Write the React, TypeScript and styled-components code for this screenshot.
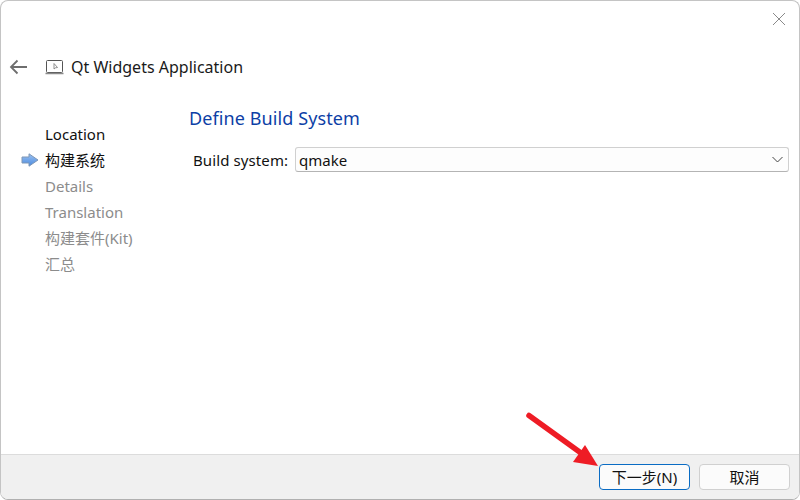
import React from "react";
import styled, { createGlobalStyle } from "styled-components";

const Global = createGlobalStyle`
  html, body { margin: 0; padding: 0; background: #fff; }
  #root { width: 800px; height: 500px; overflow: hidden; }
`;

const FONT = `"Noto Sans", "Noto Sans CJK SC", sans-serif`;

const Dialog = styled.div`
  position: relative;
  box-sizing: border-box;
  width: 800px;
  height: 500px;
  display: flex;
  flex-direction: column;
  border: 1px solid #c4c4c4;
  border-bottom-color: #b0b0b0;
  border-radius: 8px;
  overflow: hidden;
  background: #fff;
  font-family: ${FONT};
  font-size: 15px;
  color: #111;
`;

const CloseBar = styled.div`
  height: 48px;
  display: flex;
  justify-content: flex-end;
  align-items: flex-start;
  padding: 11px 13px 0 0;
  box-sizing: border-box;
`;

const TitleRow = styled.div`
  height: 36px;
  display: flex;
  align-items: center;
  padding-left: 7px;
`;

const BackIcon = styled.svg`
  width: 20px;
  height: 20px;
  margin-right: 17px;
`;

const AppIcon = styled.svg`
  width: 20px;
  height: 18px;
  margin-right: 6px;
`;

const Title = styled.div`
  font-size: 16px;
  line-height: 20px;
  color: #1a1a1a;
`;

const Body = styled.div`
  flex: 1;
  display: flex;
  min-height: 0;
`;

const Steps = styled.ul`
  list-style: none;
  margin: 0;
  padding: 36px 0 0;
  width: 188px;
  flex-shrink: 0;
`;

const Step = styled.li<{ $state: "done" | "active" | "todo" }>`
  height: 26px;
  line-height: 26px;
  padding-left: 44px;
  position: relative;
  white-space: nowrap;
  font-size: 15px;
  color: ${(p) => (p.$state === "todo" ? "#8c8c8c" : "#111")};
`;

const StepArrow = styled.svg`
  position: absolute;
  left: 20px;
  top: 6px;
  width: 18px;
  height: 14px;
`;

const Main = styled.div`
  flex: 1;
  padding: 21px 10px 0 0;
  min-width: 0;
`;

const Heading = styled.h1`
  margin: 0 0 17px;
  font-weight: 400;
  font-size: 18px;
  line-height: 24px;
  letter-spacing: 0.1px;
  color: #0d3fa6;
`;

const FieldRow = styled.div`
  display: flex;
  align-items: center;
  padding-left: 4px;
`;

const Label = styled.label`
  width: 102px;
  font-size: 15px;
  letter-spacing: 0.1px;
  color: #111;
  white-space: nowrap;
`;

const Select = styled.div`
  flex: 1;
  box-sizing: border-box;
  height: 25px;
  display: flex;
  align-items: center;
  justify-content: space-between;
  padding: 0 5px 0 3px;
  background: #fdfdfd;
  border: 1px solid #d0d0d0;
  border-bottom-color: #b4b4b4;
  border-radius: 3px;
  font-size: 15px;
  color: #111;
`;

const Footer = styled.div`
  box-sizing: border-box;
  height: 45px;
  display: flex;
  justify-content: flex-end;
  align-items: center;
  gap: 9px;
  padding: 0 9px 0 0;
  background: #f0f0f0;
  border-top: 1px solid #dcdcdc;
`;

const Button = styled.button<{ $primary?: boolean }>`
  box-sizing: border-box;
  width: 91px;
  height: 26px;
  padding: 0;
  background: #fbfbfb;
  border: 1px solid ${(p) => (p.$primary ? "#0a6cc4" : "#d0d0d0")};
  border-radius: 4px;
  font-family: ${FONT};
  font-size: 15px;
  line-height: 24px;
  color: #111;
`;

const PointerArrow = styled.svg`
  position: absolute;
  left: 520px;
  top: 408px;
  width: 90px;
  height: 70px;
`;

export default function App() {
  return (
    <>
      <Global />
      <Dialog>
        <CloseBar>
          <svg width="14" height="14" viewBox="0 0 14 14">
            <path d="M1 1 L13 13 M13 1 L1 13" stroke="#8a8a8a" strokeWidth="1" fill="none" />
          </svg>
        </CloseBar>
        <TitleRow>
          <BackIcon viewBox="0 0 20 20">
            <path d="M19 10 H3 M9.5 3.5 L3 10 L9.5 16.5" stroke="#6e6e6e" strokeWidth="1.8" fill="none" />
          </BackIcon>
          <AppIcon viewBox="0 0 20 18">
            <rect x="1.5" y="2.5" width="16" height="12" rx="1" fill="#fff" stroke="#555" strokeWidth="1" />
            <path d="M0.5 15.5 H18.5" stroke="#8a8a8a" strokeWidth="1.5" />
            <path d="M9 5.5 V11 L10.5 9.8 L12.5 9.5 Z" fill="#fff" stroke="#777" strokeWidth="0.8" />
          </AppIcon>
          <Title>Qt Widgets Application</Title>
        </TitleRow>
        <Body>
          <Steps>
            <Step $state="done">Location</Step>
            <Step $state="active">
              <StepArrow viewBox="0 0 18 14">
                <defs>
                  <linearGradient id="stepFill" x1="0" y1="0" x2="0" y2="1">
                    <stop offset="0" stopColor="#9cc2f2" />
                    <stop offset="1" stopColor="#4a8ade" />
                  </linearGradient>
                </defs>
                <path d="M1 4 H8 V0.8 L17 7 L8 13.2 V10 H1 Z" fill="url(#stepFill)" stroke="#7f97b6" strokeWidth="1" />
              </StepArrow>
              构建系统
            </Step>
            <Step $state="todo">Details</Step>
            <Step $state="todo">Translation</Step>
            <Step $state="todo">构建套件(Kit)</Step>
            <Step $state="todo">汇总</Step>
          </Steps>
          <Main>
            <Heading>Define Build System</Heading>
            <FieldRow>
              <Label>Build system:</Label>
              <Select>
                <span>qmake</span>
                <svg width="11" height="7" viewBox="0 0 11 7">
                  <path d="M0.5 1 L5.5 6 L10.5 1" stroke="#444" strokeWidth="1" fill="none" />
                </svg>
              </Select>
            </FieldRow>
          </Main>
        </Body>
        <Footer>
          <Button $primary>下一步(N)</Button>
          <Button>取消</Button>
        </Footer>
        <PointerArrow viewBox="0 0 90 70">
          <path d="M8 6.5 L60 44" stroke="#ee1c25" strokeWidth="5.5" strokeLinecap="round" fill="none" />
          <path d="M77 57 L64 36 L52 53 Z" fill="#ee1c25" />
        </PointerArrow>
      </Dialog>
    </>
  );
}
